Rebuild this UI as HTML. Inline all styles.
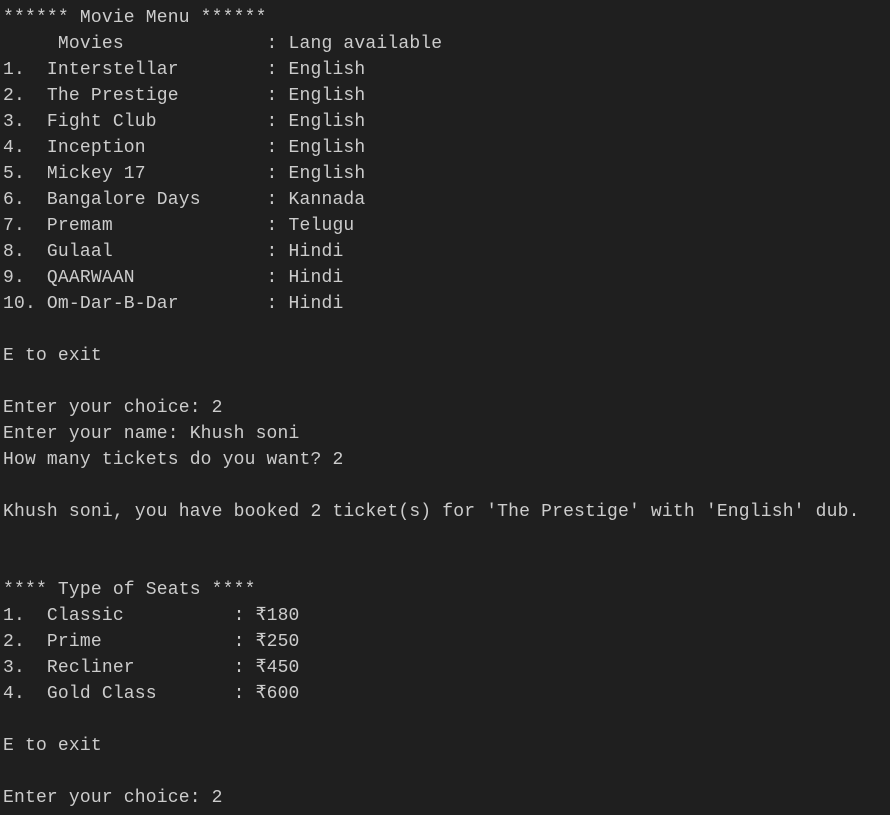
<!DOCTYPE html>
<html><head><meta charset="utf-8"><style>
html,body{margin:0;padding:0;background:#1f1f1f;width:890px;height:815px;overflow:hidden}
pre{margin:0;padding:5px 0 0 3px;font-family:"Liberation Mono","DejaVu Sans Mono",monospace;font-size:18px;letter-spacing:0.18px;line-height:26px;color:#cccccc;white-space:pre}
</style></head><body><pre>****** Movie Menu ******
     Movies             : Lang available
1.  Interstellar        : English
2.  The Prestige        : English
3.  Fight Club          : English
4.  Inception           : English
5.  Mickey 17           : English
6.  Bangalore Days      : Kannada
7.  Premam              : Telugu
8.  Gulaal              : Hindi
9.  QAARWAAN            : Hindi
10. Om-Dar-B-Dar        : Hindi

E to exit

Enter your choice: 2
Enter your name: Khush soni
How many tickets do you want? 2

Khush soni, you have booked 2 ticket(s) for 'The Prestige' with 'English' dub.


**** Type of Seats ****
1.  Classic          : ₹180
2.  Prime            : ₹250
3.  Recliner         : ₹450
4.  Gold Class       : ₹600

E to exit

Enter your choice: 2</pre></body></html>
